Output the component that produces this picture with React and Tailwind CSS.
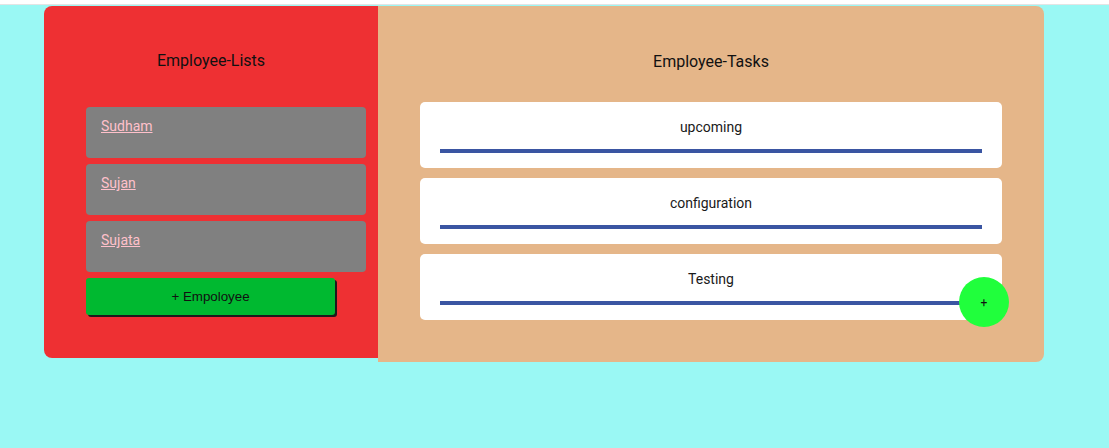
export default function App() {
  const employees = ["Sudham", "Sujan", "Sujata"];
  const tasks = ["upcoming", "configuration", "Testing"];
  return (
    <div className="min-h-[448px] w-full bg-[#9af8f4]" style={{ fontFamily: "Roboto, 'Liberation Sans', sans-serif" }}>
      <div className="h-[4px] bg-white" />
      <div className="h-[1px] bg-[#e4e4e4]" />
      <div className="flex items-start pt-[1px] pl-[44px]">
        <div className="w-[334px] h-[352px] bg-[#ee3033] rounded-l-[8px] pt-[43px]">
          <h2 className="text-center text-[16px] leading-[24px] text-[#111]">Employee-Lists</h2>
          <div className="mt-[34px] ml-[42px] w-[280px] flex flex-col gap-[6px]">
            {employees.map((e) => (
              <div key={e} className="h-[51px] bg-[#808080] rounded-[4px] pt-[7px] pl-[15px]">
                <a href="#" className="text-[14px] leading-[20px] text-[#ffc0cb] underline">{e}</a>
              </div>
            ))}
            <button
              className="w-[249px] h-[37px] bg-[#00b930] rounded-[3px] shadow-[2px_2px_0_#1c1c1c] text-[13.33px] text-[#111] text-center"
              style={{ fontFamily: "'Liberation Sans', Arial, sans-serif" }}
            >
              + Empoloyee
            </button>
          </div>
        </div>
        <div className="w-[666px] h-[356px] bg-[#e5b689] rounded-r-[8px] pt-[44px]">
          <h2 className="text-center text-[16px] leading-[24px] text-[#111]">Employee-Tasks</h2>
          <div className="mt-[28px] ml-[42px] w-[582px] flex flex-col gap-[10px]">
            {tasks.map((t, i) => (
              <div key={t} className="relative h-[66px] bg-white rounded-[5px] pt-[15px] px-[20px]">
                <div className="text-center text-[14px] leading-[20px] text-[#1a1a1a]">{t}</div>
                <div className="mt-[12px] h-[4px] bg-[#3a55a2]" />
                {i === 2 && (
                  <button className="absolute right-[-7px] top-[23px] w-[50px] h-[50px] rounded-full bg-[#20ff3c] flex items-center justify-center pt-[2px] text-[12px] text-[#111]">
                    +
                  </button>
                )}
              </div>
            ))}
          </div>
        </div>
      </div>
    </div>
  );
}
